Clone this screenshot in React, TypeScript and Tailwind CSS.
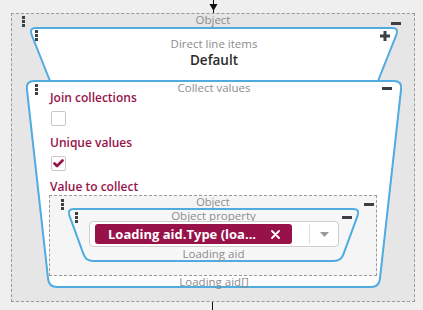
import React from "react"

const BLUE = "#4fabe0"

function trapPath(w: number, h: number, inset: number, r: number) {
  const s = 1
  const len = Math.hypot(inset, h - 2 * s)
  const dx = (inset * r) / len
  const dy = ((h - 2 * s) * r) / len
  const tl = [s, s], tr = [w - s, s], br = [w - s - inset, h - s], bl = [s + inset, h - s]
  return `M ${tl[0] + r} ${tl[1]} L ${tr[0] - r} ${tr[1]} Q ${tr[0]} ${tr[1]} ${tr[0] - dx} ${tr[1] + dy} L ${br[0] + dx} ${br[1] - dy} Q ${br[0]} ${br[1]} ${br[0] - r} ${br[1]} L ${bl[0] + r} ${bl[1]} Q ${bl[0]} ${bl[1]} ${bl[0] - dx} ${bl[1] - dy} L ${tl[0] + dx} ${tl[1] + dy} Q ${tl[0]} ${tl[1]} ${tl[0] + r} ${tl[1]} Z`
}

function openTrapPath(w: number, h: number, inset: number, r: number) {
  const s = 1
  const len = Math.hypot(inset, h)
  const dx = (inset * r) / len
  const dy = (h * r) / len
  return `M ${s + inset} ${h + s} L ${s + dx} ${s + dy} Q ${s} ${s} ${s + r} ${s} L ${w - s - r} ${s} Q ${w - s} ${s} ${w - s - dx} ${s + dy} L ${w - s - inset} ${h + s}`
}

function Shape({ w, h, inset, r, fill, open }: { w: number; h: number; inset: number; r: number; fill: string; open?: boolean }) {
  return (
    <svg className="absolute left-0 top-0 overflow-visible" width={w} height={h}>
      {open ? (
        <>
          <path d={openTrapPath(w, h, inset, r) + " Z"} fill={fill} stroke="none" />
          <path d={openTrapPath(w, h, inset, r)} fill="none" stroke={BLUE} strokeWidth={2} />
        </>
      ) : (
        <path d={trapPath(w, h, inset, r)} fill={fill} stroke={BLUE} strokeWidth={2} />
      )}
    </svg>
  )
}

function Handle({ className }: { className: string }) {
  return (
    <div className={`absolute flex flex-col gap-[1px] ${className}`}>
      <div className="w-[3px] h-[3px] bg-[#3b3f46]" />
      <div className="w-[3px] h-[3px] bg-[#3b3f46]" />
      <div className="w-[3px] h-[3px] bg-[#3b3f46]" />
    </div>
  )
}

function Minus({ className }: { className: string }) {
  return <div className={`absolute w-[10px] h-[3px] bg-[#3b3f46] ${className}`} />
}

function Plus({ className }: { className: string }) {
  return (
    <svg className={`absolute ${className}`} width="10" height="10" viewBox="0 0 10 10">
      <rect x="0" y="3.5" width="10" height="3" fill="#3b3f46" />
      <rect x="3.5" y="0" width="3" height="10" fill="#3b3f46" />
    </svg>
  )
}

function Checkbox({ checked }: { checked?: boolean }) {
  return (
    <div className="ml-[26px] w-[15px] h-[15px] rounded-[2px] border border-[#c8c8c8] bg-white flex items-center justify-center">
      {checked && (
        <svg width="11" height="9" viewBox="0 0 11 9">
          <path d="M1.5 4.5 L4 7 L9.5 1.5" fill="none" stroke="#98124a" strokeWidth="2.6" strokeLinecap="round" strokeLinejoin="round" />
        </svg>
      )}
    </div>
  )
}

export default function App() {
  return (
    <div className="w-[423px] h-[310px] bg-[#efefef] flex flex-col font-['Open_Sans',sans-serif] overflow-hidden">
      {/* incoming arrow */}
      <div className="h-[13px] pl-[209px]">
        <svg width="9" height="13" viewBox="0 0 9 13">
          <line x1="4.5" y1="0" x2="4.5" y2="13" stroke="#111" strokeWidth="1" />
          <polygon points="0.5,4 8.5,4 4.5,11" fill="#111" />
        </svg>
      </div>

      {/* Object */}
      <div className="ml-[11px] w-[404px] h-[289px] border border-dashed border-[#9a9a9a] bg-[#e6e6e6] relative flex flex-col">
        <Handle className="left-[10px] top-[2px]" />
        <Minus className="right-[13px] top-[8px]" />
        <div className="h-[13px] text-center text-[11.5px] leading-[12px] text-[#8c8c8c]">Object</div>

        {/* Direct line items */}
        <div className="ml-[16px] w-[372px] h-[53px] relative">
          <Shape w={372} h={53} inset={21} r={7} fill="#ffffff" open />
          <Handle className="left-[7px] top-[3px]" />
          <Plus className="right-[10px] top-[4px]" />
          <div className="relative flex flex-col items-center pt-[10px]">
            <div className="text-[11.5px] leading-[14px] text-[#8c8c8c]">Direct line items</div>
            <div className="mt-[1px] text-[13.5px] leading-[16px] font-semibold text-[#2b2b2b]">Default</div>
          </div>
        </div>

        {/* Collect values */}
        <div className="ml-[13px] w-[378px] h-[208px] relative">
          <Shape w={378} h={208} inset={23} r={8} fill="#ffffff" />
          <Handle className="left-[10px] top-[4px]" />
          <Minus className="right-[11px] top-[7px]" />
          <div className="relative flex flex-col">
            <div className="h-[14px] pt-[1px] text-center text-[11.5px] leading-[13px] text-[#8c8c8c]">Collect values</div>
            <div className="mt-[-3px] ml-[25px] text-[12px] leading-[14px] font-semibold text-[#98124a]">Join collections</div>
            <div className="mt-[6px]"><Checkbox /></div>
            <div className="mt-[10px] ml-[25px] text-[12px] leading-[14px] font-semibold text-[#98124a]">Unique values</div>
            <div className="mt-[6px]"><Checkbox checked /></div>
            <div className="mt-[9px] ml-[25px] text-[12px] leading-[14px] font-semibold text-[#98124a]">Value to collect</div>

            {/* inner Object */}
            <div className="mt-[1px] ml-[24px] w-[328px] h-[81px] border border-dashed border-[#9a9a9a] bg-[#f5f5f5] relative flex flex-col">
              <Handle className="left-[11px] top-[3px]" />
              <Minus className="right-[2px] top-[7px]" />
              <div className="h-[12px] text-center text-[11px] leading-[11px] text-[#8c8c8c]">Object</div>

              {/* Object property */}
              <div className="ml-[16px] w-[295px] h-[54px] relative">
                <Shape w={295} h={54} inset={19} r={7} fill="#f7f7f7" />
                <Handle className="left-[9px] top-[4px]" />
                <Minus className="right-[9px] top-[8px]" />
                <div className="relative flex flex-col">
                  <div className="h-[13px] pt-[2px] text-center text-[11.5px] leading-[11px] text-[#8c8c8c]">Object property</div>
                  <div className="ml-[23px] w-[250px] h-[26px] rounded-[4px] border border-[#cfcfcf] bg-white flex items-center">
                    <div className="ml-[5px] w-[197px] h-[20px] rounded-[3px] bg-[#98124a] flex items-center pl-[13px] pr-[12px] justify-between">
                      <span className="text-[13px] leading-[16px] font-bold text-white whitespace-nowrap">Loading aid.Type (loa...</span>
                      <svg width="9" height="9" viewBox="0 0 9 9">
                        <path d="M1 1 L8 8 M8 1 L1 8" stroke="#fff" strokeWidth="1.8" strokeLinecap="round" />
                      </svg>
                    </div>
                    <div className="ml-[17px] w-px h-[20px] bg-[#dcdcdc]" />
                    <svg className="ml-[10px]" width="9" height="5" viewBox="0 0 9 5">
                      <polygon points="0,0 9,0 4.5,5" fill="#9a9a9a" />
                    </svg>
                  </div>
                  <div className="h-[13px] text-center text-[11.5px] leading-[13px] text-[#8c8c8c]">Loading aid</div>
                </div>
              </div>
            </div>
            <div className="h-[12px] text-center text-[11.5px] leading-[12px] text-[#8c8c8c]">Loading aid[]</div>
          </div>
        </div>
      </div>

      {/* outgoing line */}
      <div className="ml-[212px] w-px h-[8px] bg-[#111]" />
    </div>
  )
}
